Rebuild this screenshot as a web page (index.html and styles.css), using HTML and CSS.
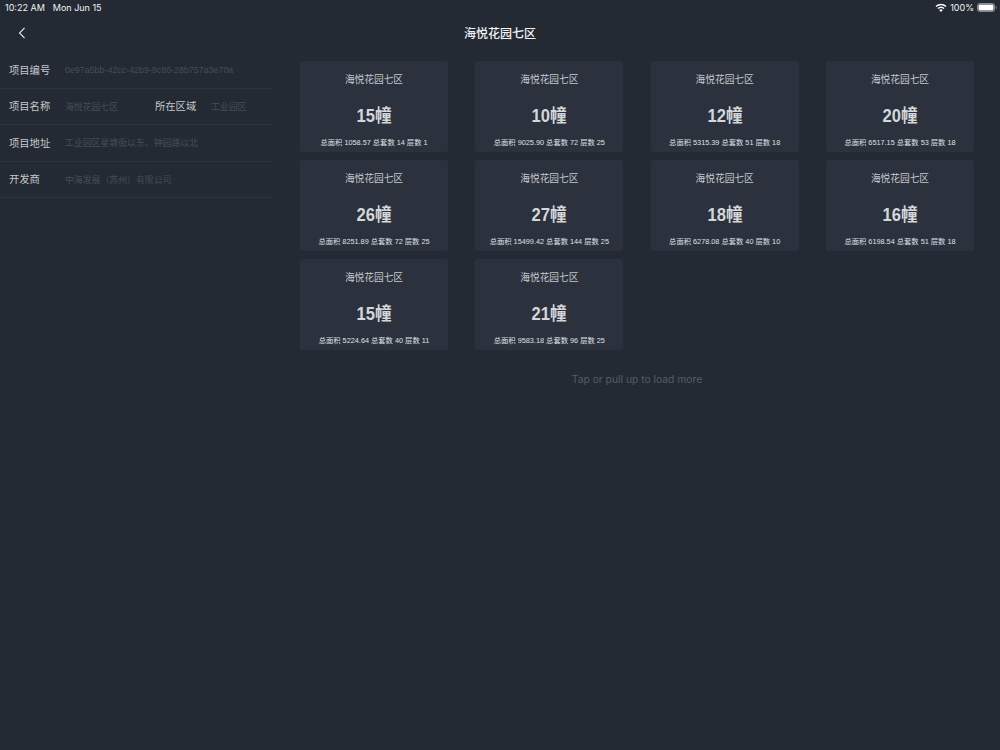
FILE: index.html
```html
<!DOCTYPE html>
<html lang="zh">
<head>
<meta charset="utf-8">
<title>海悦花园七区</title>
<link rel="stylesheet" href="styles.css">
</head>
<body>
<div class="status">
  <div class="status-left"><span>10:22 AM</span><span>Mon Jun 15</span></div>
  <div class="status-right">
    <svg class="wifi" width="12" height="9" viewBox="0 0 12 9"><path d="M6 9 4.200 7a2.600 2.600 0 0 1 3.600 0Z" fill="#fff"/><path d="M2.900 5.600a4.600 4.600 0 0 1 6.200 0" fill="none" stroke="#fff" stroke-width="1.400"/><path d="M1 3.500a7.400 7.400 0 0 1 10 0" fill="none" stroke="#fff" stroke-width="1.400"/></svg>
    <span>100%</span>
    <svg class="battery" width="20" height="9" viewBox="0 0 20 9"><rect x=".5" y=".5" width="17" height="8" rx="2" fill="none" stroke="#8a8d92"/><rect x="1.500" y="1.500" width="15" height="6" rx="1" fill="#fff"/><path d="M18.600 3v3c.7-.2 1-.8 1-1.500s-.3-1.300-1-1.500Z" fill="#8a8d92"/></svg>
  </div>
</div>
<header class="nav">
  <svg class="back" width="8" height="12" viewBox="0 0 8 12"><path d="M6.500 1 1.500 6l5 5" fill="none" stroke="#e0e2e4" stroke-width="1.100"/></svg>
  <h1>海悦花园七区</h1>
</header>
<main class="content">
  <aside class="info">
    <div class="row"><span class="label">项目编号</span><span class="value">0e97a5bb-42cc-42b9-9c86-28b757a3e70a</span></div>
    <div class="row">
      <span class="label">项目名称</span><span class="value half">海悦花园七区</span>
      <span class="label">所在区域</span><span class="value">工业园区</span>
    </div>
    <div class="row"><span class="label">项目地址</span><span class="value">工业园区星塘街以东、钟园路以北</span></div>
    <div class="row"><span class="label">开发商</span><span class="value">中海发展（苏州）有限公司</span></div>
  </aside>
  <section class="list">
    <div class="grid">
      <article class="card"><h2>海悦花园七区</h2><strong>15幢</strong><p>总面积 1058.57 总套数 14 层数 1</p></article>
      <article class="card"><h2>海悦花园七区</h2><strong>10幢</strong><p>总面积 9025.90 总套数 72 层数 25</p></article>
      <article class="card"><h2>海悦花园七区</h2><strong>12幢</strong><p>总面积 5315.39 总套数 51 层数 18</p></article>
      <article class="card"><h2>海悦花园七区</h2><strong>20幢</strong><p>总面积 6517.15 总套数 53 层数 18</p></article>
      <article class="card"><h2>海悦花园七区</h2><strong>26幢</strong><p>总面积 8251.89 总套数 72 层数 25</p></article>
      <article class="card"><h2>海悦花园七区</h2><strong>27幢</strong><p>总面积 15499.42 总套数 144 层数 25</p></article>
      <article class="card"><h2>海悦花园七区</h2><strong>18幢</strong><p>总面积 6278.08 总套数 40 层数 10</p></article>
      <article class="card"><h2>海悦花园七区</h2><strong>16幢</strong><p>总面积 6198.54 总套数 51 层数 18</p></article>
      <article class="card"><h2>海悦花园七区</h2><strong>15幢</strong><p>总面积 5224.64 总套数 40 层数 11</p></article>
      <article class="card"><h2>海悦花园七区</h2><strong>21幢</strong><p>总面积 9583.18 总套数 96 层数 25</p></article>
    </div>
    <div class="more">Tap or pull up to load more</div>
  </section>
</main>
</body>
</html>
```
FILE: styles.css
```css
* { box-sizing: border-box; margin: 0; padding: 0; }
html, body { height: 100%; }
body {
  width: 1000px;
  height: 750px;
  overflow: hidden;
  background: #232a33;
  color: #fff;
  font-family: "Liberation Sans", "Noto Sans CJK SC", sans-serif;
}
.status {
  height: 14px;
  padding: 0 3px 0 5px;
  display: flex;
  justify-content: space-between;
  align-items: center;
  font-size: 9px;
  color: #f2f3f4;
  font-family: Inter, "Liberation Sans", sans-serif;
}
.status-left { display: flex; gap: 8px; }
.status-right { display: flex; align-items: center; gap: 3px; }
.nav {
  height: 38px;
  padding-bottom: 2px;
  display: flex;
  align-items: center;
  justify-content: center;
}
.nav h1 { font-size: 12px; font-weight: 500; color: #f2f3f4; }
.back { position: absolute; left: 18px; top: 27px; }
.content { display: flex; }
.info { width: 272px; flex: none; }
.row {
  height: 36.500px;
  display: flex;
  align-items: center;
  padding-left: 9px;
  padding-bottom: 1px;
  border-bottom: 1px solid #2d343d;
}
.label { font-size: 10.300px; color: #c6c9cd; width: 56px; flex: none; }
.value { font-size: 8.900px; color: #474d55; white-space: nowrap; padding-top: 1px; }
.half { width: 90px; flex: none; }
.list { margin-left: 28px; width: 674px; flex: none; padding-top: 8.500px; }
.grid {
  display: grid;
  grid-template-columns: repeat(4, 148px);
  justify-content: space-between;
  row-gap: 8px;
}
.card {
  height: 91px;
  background: #2b323d;
  border-radius: 3px;
  display: flex;
  flex-direction: column;
  align-items: center;
  text-align: center;
}
.card h2 { font-size: 9.700px; font-weight: 400; color: #c6c9cd; margin-top: 12px; line-height: 14px; }
.card strong {
  font-size: 18px;
  font-weight: 700;
  color: #d4d6d9;
  margin-top: 18.500px;
  line-height: 22px;
  transform: scaleX(.92);
}
.card p { font-size: 7.300px; color: #dfe1e3; margin-top: 10px; line-height: 12px; white-space: nowrap; }
.more {
  margin-top: 23.500px;
  text-align: center;
  font-size: 10.300px;
  color: #565c64;
  font-family: Inter, "Liberation Sans", sans-serif;
}
```
